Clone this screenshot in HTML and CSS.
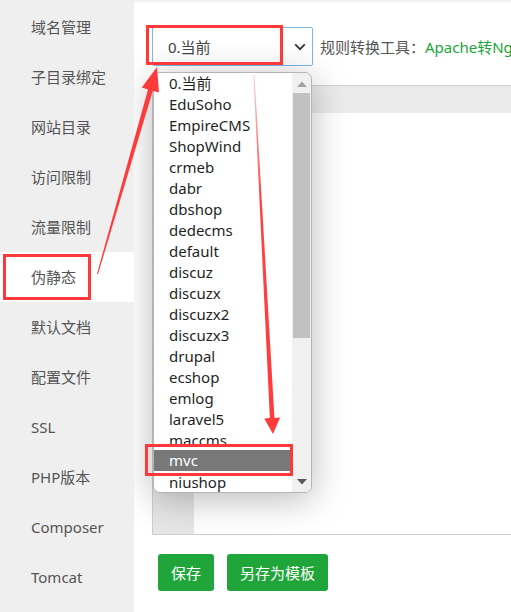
FILE: index.html
```html
<!DOCTYPE html>
<html lang="zh-CN">
<head>
<meta charset="utf-8">
<title>伪静态</title>
<link rel="stylesheet" href="styles.css">
</head>
<body>
<div class="layout">
  <aside class="sidebar">
    <div class="nav-item">域名管理</div>
    <div class="nav-item">子目录绑定</div>
    <div class="nav-item">网站目录</div>
    <div class="nav-item">访问限制</div>
    <div class="nav-item">流量限制</div>
    <div class="nav-item active">伪静态</div>
    <div class="nav-item">默认文档</div>
    <div class="nav-item">配置文件</div>
    <div class="nav-item">SSL</div>
    <div class="nav-item">PHP版本</div>
    <div class="nav-item">Composer</div>
    <div class="nav-item">Tomcat</div>
  </aside>
  <main class="main">
    <div class="toolbar">
      <div class="select">
        <span class="select-value">0.当前</span>
        <svg class="chevron" width="12" height="8" viewBox="0 0 12 8"><path d="M1.2 1.4 L6 6.2 L10.8 1.4" fill="none" stroke="#333" stroke-width="1.8"/></svg>
      </div>
      <span class="label">规则转换工具：</span><span class="link">Apache转Nginx</span>
    </div>
    <div class="editor">
      <div class="editor-top"></div>
      <div class="editor-body"><div class="gutter"></div></div>
    </div>
    <div class="actions">
      <button class="btn">保存</button>
      <button class="btn">另存为模板</button>
    </div>
    <div class="dropdown">
      <ul class="options">
        <li>0.当前</li>
        <li>EduSoho</li>
        <li>EmpireCMS</li>
        <li>ShopWind</li>
        <li>crmeb</li>
        <li>dabr</li>
        <li>dbshop</li>
        <li>dedecms</li>
        <li>default</li>
        <li>discuz</li>
        <li>discuzx</li>
        <li>discuzx2</li>
        <li>discuzx3</li>
        <li>drupal</li>
        <li>ecshop</li>
        <li>emlog</li>
        <li>laravel5</li>
        <li>maccms</li>
        <li class="selected">mvc</li>
        <li>niushop</li>
      </ul>
      <div class="scrollbar">
        <svg class="sb-up" width="10" height="6" viewBox="0 0 10 6"><path d="M0 6 L5 0.5 L10 6 Z" fill="#a3a3a3"/></svg>
        <div class="sb-thumb"></div>
        <svg class="sb-down" width="10" height="6" viewBox="0 0 10 6"><path d="M0 0 L5 5.5 L10 0 Z" fill="#5a5a5a"/></svg>
      </div>
    </div>
  </main>
</div>
<svg class="annotations" width="511" height="612" viewBox="0 0 511 612">
  <defs>
    <linearGradient id="fade2" x1="0" y1="75" x2="0" y2="434" gradientUnits="userSpaceOnUse">
      <stop offset="0" stop-color="#ff3a3a" stop-opacity="0.25"/>
      <stop offset="0.35" stop-color="#ff3a3a" stop-opacity="0.95"/>
      <stop offset="1" stop-color="#ff3a3a"/>
    </linearGradient>
  </defs>
  <rect x="147.5" y="26.5" width="134" height="37" fill="none" stroke="#ff3838" stroke-width="3"/>
  <rect x="4.5" y="255.5" width="85" height="43" fill="none" stroke="#ff3838" stroke-width="3"/>
  <rect x="146.5" y="445.5" width="145" height="29" fill="none" stroke="#ff3838" stroke-width="3"/>
  <polygon fill="#ff3a3a" points="98,274.2 152.8,90.8 159,92.6 157,67 141.8,87.6 148,89.4 97,273.8"/>
  <polygon fill="url(#fade2)" points="254.5,75 274.45,417.9 280.1,417.6 273,434 264.2,418.4 269.85,418.1 253.5,75"/>
</svg>
</body>
</html>
```

FILE: styles.css
```css
html, body {
  margin: 0;
  padding: 0;
  overflow: hidden;
  width: 511px;
  height: 612px;
}

body {
  background: #f1f1f1;
  font-family: "Noto Sans", "Noto Sans CJK SC", sans-serif;
  position: relative;
}

.layout {
  display: flex;
  height: 612px;
}

.sidebar {
  width: 134px;
  flex: none;
  padding-top: 2px;
  background: #efefef;
}

.nav-item {
  height: 50px;
  line-height: 50px;
  padding-left: 31px;
  font-size: 15px;
  color: #555;
}

.nav-item.active {
  background: #fff;
  width: 103px;
}

.main {
  position: relative;
  flex: 1;
  margin-top: 2px;
  background: #fff;
  padding: 25px 0 0 18px;
  overflow: hidden;
  min-width: 0;
}

.toolbar {
  display: flex;
  align-items: center;
  height: 39px;
  white-space: nowrap;
}

.select {
  box-sizing: border-box;
  width: 161px;
  height: 39px;
  border: 1px solid #7cb8ec;
  border-radius: 2px;
  display: flex;
  align-items: center;
  justify-content: space-between;
  padding: 0 6px 0 15px;
  flex: none;
}

.select-value {
  font-size: 15px;
  color: #444;
}

.chevron {
  display: block;
}

.label {
  margin-left: 7px;
  font-size: 15px;
  color: #555;
}

.link {
  font-size: 15px;
  color: #20a53a;
}

.editor {
  margin-top: 19px;
  width: 420px;
  height: 450px;
  box-sizing: border-box;
  border: 1px solid #cfcfcf;
  border-right: none;
  display: flex;
  flex-direction: column;
}

.editor-top {
  height: 27px;
  background: #ebebeb;
  flex: none;
}

.editor-body {
  flex: 1;
  display: flex;
}

.gutter {
  width: 41px;
  background: #e6e6e6;
}

.actions {
  display: flex;
  gap: 13px;
  margin-top: 19px;
  padding-left: 6px;
}

.btn {
  height: 37px;
  padding: 0 13px;
  border: none;
  border-radius: 3px;
  background: #20a53a;
  color: #fff;
  font-family: "Noto Sans", "Noto Sans CJK SC", sans-serif;
  font-size: 15px;
}

.dropdown {
  position: absolute;
  left: 19px;
  top: 70px;
  width: 159px;
  height: 421px;
  box-sizing: border-box;
  border: 1px solid #b4b4b4;
  border-radius: 7px;
  background: #fff;
  display: flex;
  overflow: hidden;
  box-shadow: 0 6px 36px rgba(0, 0, 0, 0.28);
}

.options {
  list-style: none;
  margin: 0;
  padding: 0;
  width: 138px;
  flex: none;
}

.options li {
  height: 21px;
  line-height: 21px;
  padding-left: 15px;
  font-size: 15px;
  color: #1f1f1f;
  white-space: nowrap;
}

.options li.selected {
  background: #787878;
  color: #fff;
  position: relative;
  top: -1px;
}

.scrollbar {
  position: relative;
  flex: 1;
  background: #f0f0f0;
}

.sb-up {
  position: absolute;
  left: 5px;
  top: 8px;
}

.sb-thumb {
  position: absolute;
  left: 1px;
  right: 1px;
  top: 20px;
  height: 245px;
  background: #c1c1c1;
}

.sb-down {
  position: absolute;
  left: 5px;
  top: 406px;
}

.annotations {
  position: absolute;
  left: 0;
  top: 0;
  pointer-events: none;
}
```
